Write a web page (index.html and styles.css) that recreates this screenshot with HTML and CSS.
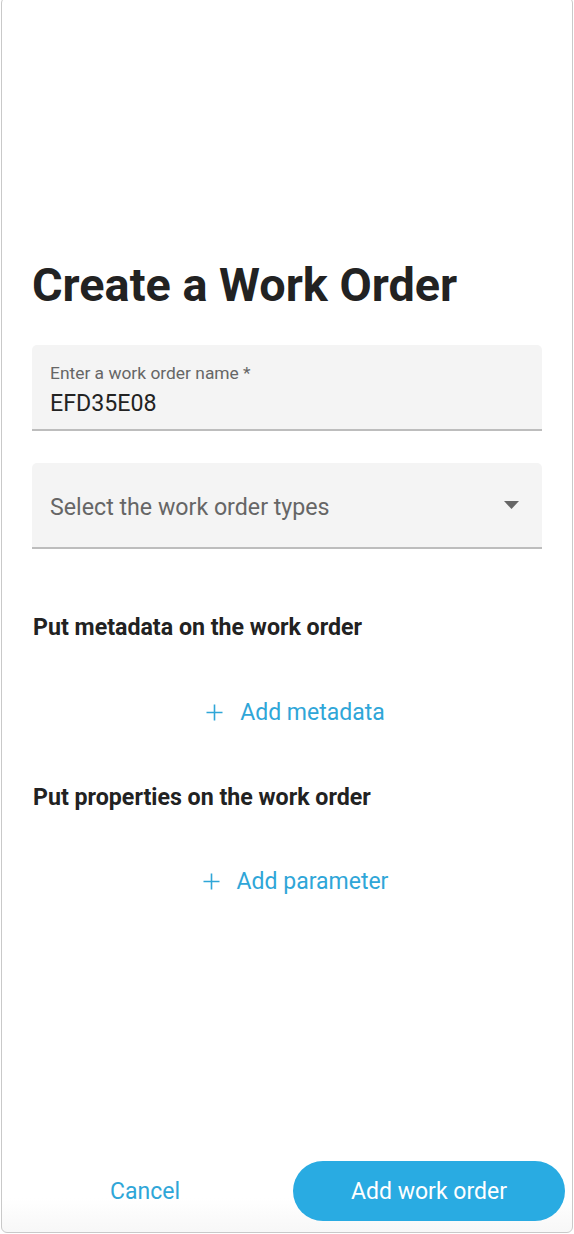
FILE: index.html
```html
<!DOCTYPE html>
<html>
<head>
<meta charset="utf-8">
<link rel="stylesheet" href="styles.css">
</head>
<body>
<div class="frame">
  <div class="content">
    <h1 class="title">Create a Work Order</h1>
    <div class="field">
      <div class="label">Enter a work order name *</div>
      <div class="value">EFD35E08</div>
    </div>
    <div class="field select">
      <div class="placeholder">Select the work order types</div>
      <svg class="arrow" width="15" height="8" viewBox="0 0 15 8"><path d="M0 0 L15 0 L7.5 8 Z" fill="#666"/></svg>
    </div>
    <h2 class="section">Put metadata on the work order</h2>
    <div class="add-row">
      <button class="add"><svg width="17" height="17" viewBox="0 0 17 17"><path d="M8.5 0.5 V16.5 M0.5 8.5 H16.5" stroke="#2fa6d8" stroke-width="1.6" fill="none"/></svg><span>Add metadata</span></button>
    </div>
    <h2 class="section sec2">Put properties on the work order</h2>
    <div class="add-row row2">
      <button class="add"><svg width="17" height="17" viewBox="0 0 17 17"><path d="M8.5 0.5 V16.5 M0.5 8.5 H16.5" stroke="#2fa6d8" stroke-width="1.6" fill="none"/></svg><span>Add parameter</span></button>
    </div>
  </div>
  <div class="footer">
    <button class="cancel">Cancel</button>
    <button class="primary">Add work order</button>
  </div>
</div>
</body>
</html>
```
FILE: styles.css
```css
* { box-sizing: border-box; }
html, body { margin: 0; padding: 0; background: #fff; }
body { font-family: Roboto, "Noto Sans", sans-serif; width: 574px; height: 1234px; overflow: hidden; }
.frame {
  margin-left: 1px;
  margin-top: -3px;
  width: 572px;
  height: 1236px;
  border: 1px solid #c9c9c9;
  border-radius: 6px;
  display: flex;
  flex-direction: column;
  background: linear-gradient(to bottom, #fff 0, #fff 1200px, #f7f7f7 1236px);
}
.content { padding: 0 30px 0 30px; flex: 1; }
.title {
  margin: 260px 0 0 0;
  font-size: 46.8px;
  font-weight: 700;
  color: #222;
  line-height: 54px;
}
.field {
  margin-top: 33px;
  height: 86px;
  background: #f4f4f4;
  border-radius: 5px 5px 0 0;
  border-bottom: 2px solid #bdbdbd;
  padding: 18px 18px 0 18px;
}
.label { font-size: 17.4px; color: #666; line-height: 20px; }
.value { font-size: 23.2px; color: #222; line-height: 24px; margin-top: 8px; }
.select {
  display: flex;
  align-items: center;
  justify-content: space-between;
  padding: 4px 23px 0 18px;
  margin-top: 32px;
}
.placeholder { font-size: 23.2px; color: #666; }
.arrow { display: block; margin-top: -4px; }
.section {
  margin: 64px 0 0 1px;
  font-size: 23.2px;
  font-weight: 700;
  color: #222;
  line-height: 28px;
}
.sec2 { margin-top: 57px; }
.add-row { display: flex; justify-content: center; margin-top: 58px; }
.row2 { margin-top: 57px; }
.add {
  display: flex; align-items: center; gap: 17px;
  border: 0; background: none; padding: 0;
  font-family: Roboto, sans-serif; font-size: 23px; color: #2fa6d8;
  margin-left: 17px;
}
.add svg { display: block; }
.footer {
  display: flex;
  align-items: center;
  justify-content: space-between;
  padding: 0 7px 11px 91px;
}
.cancel {
  border: 0; background: none; padding: 0;
  font-family: Roboto, sans-serif; font-size: 23px; color: #2fa6d8;
  width: 104px;
}
.primary {
  width: 272px; height: 60px;
  border: 0; border-radius: 30px;
  background: #29abe2;
  color: #fff;
  font-family: Roboto, sans-serif; font-size: 23px;
}
```
